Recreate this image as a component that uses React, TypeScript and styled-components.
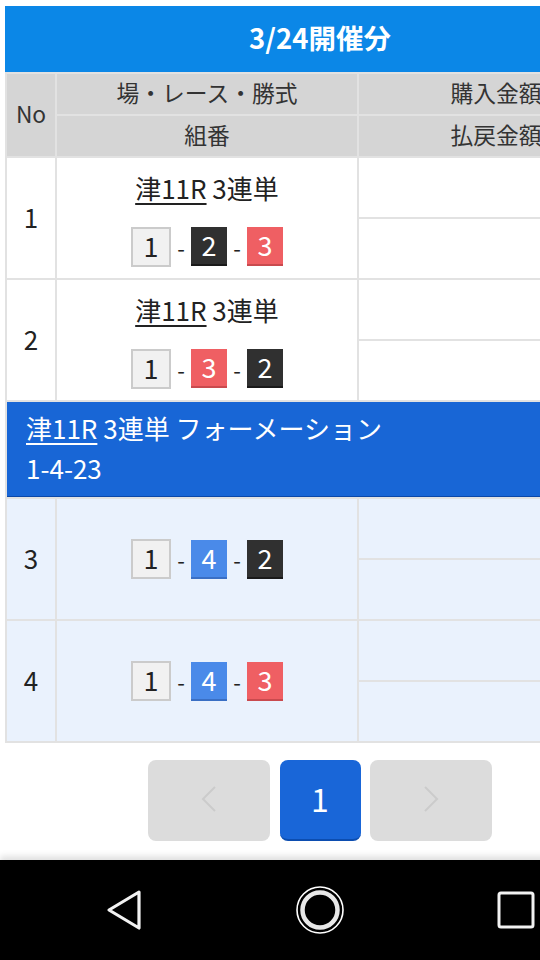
import styled, { createGlobalStyle } from 'styled-components';

const GlobalStyle = createGlobalStyle`
  html, body {
    margin: 0;
    padding: 0;
    background: #fff;
    overflow: hidden;
  }
  body {
    font-family: 'Noto Sans CJK JP', Roboto, sans-serif;
    color: #222;
  }
`;

const Frame = styled.div`
  width: 540px;
  height: 960px;
  overflow: hidden;
`;

const Page = styled.div`
  width: 640px;
  height: 960px;
  display: flex;
  flex-direction: column;
`;

const Content = styled.div`
  padding: 6px 5px 0;
`;

// the CJK font sits low in its line box, so centred text gets a little bottom padding
const TitleBar = styled.div`
  box-sizing: border-box;
  height: 66px;
  padding-bottom: 4px;
  background: #0b87e7;
  color: #fff;
  font-size: 27.5px;
  font-weight: 700;
  display: flex;
  align-items: center;
  justify-content: center;
`;

const Table = styled.div`
  display: grid;
  grid-template-columns: 48px 300px 274px;
  gap: 2px;
  padding: 2px;
  background: #e2e2e2;
`;

const HeadCell = styled.div<{ $tall?: boolean }>`
  box-sizing: border-box;
  background: #d5d5d5;
  color: #333;
  font-size: 22.75px;
  height: ${(p) => (p.$tall ? 'auto' : '40px')};
  grid-row: ${(p) => (p.$tall ? 'span 2' : 'auto')};
  padding-bottom: 4px;
  display: flex;
  align-items: center;
  justify-content: center;
`;

const Cell = styled.div<{ $tint?: boolean }>`
  background: ${(p) => (p.$tint ? '#eaf2fd' : '#fff')};
  height: 120px;
  display: flex;
  flex-direction: column;
  align-items: center;
  justify-content: center;
  gap: 17px;
`;

const NoCell = styled(Cell)`
  box-sizing: border-box;
  padding-bottom: 4px;
  font-size: 26px;
  color: #222;
`;

const AmountCell = styled.div`
  display: grid;
  grid-template-rows: 1fr 1fr;
  gap: 2px;
  background: #e2e2e2;
`;

const AmountPart = styled.div<{ $tint?: boolean }>`
  background: ${(p) => (p.$tint ? '#eaf2fd' : '#fff')};
`;

const RaceTitle = styled.div`
  font-size: 26px;
  line-height: 36px;
  padding-bottom: 4px;
  color: #222;
`;

const Place = styled.span`
  text-decoration: underline;
  text-underline-offset: 4px;
`;

const Combo = styled.div`
  display: flex;
  align-items: center;
  gap: 6px;
`;

const Dash = styled.span`
  width: 8px;
  text-align: center;
  font-size: 22px;
  color: #222;
`;

const boatColors: Record<number, { bg: string; edge: string; fg: string }> = {
  2: { bg: '#303030', edge: '#1a1a1a', fg: '#fff' },
  3: { bg: '#ef5f63', edge: '#c94a4e', fg: '#fff' },
  4: { bg: '#4a8ae9', edge: '#3a6fc4', fg: '#fff' },
};

const Boat = styled.span<{ $n: number }>`
  box-sizing: border-box;
  display: flex;
  align-items: center;
  justify-content: center;
  font-size: 27px;
  line-height: 1;
  ${(p) =>
    p.$n === 1
      ? `
    width: 40px;
    height: 40px;
    padding-bottom: 3px;
    background: #f1f1f1;
    border: 2px solid #cbcbcb;
    color: #222;
  `
      : `
    width: 36px;
    height: 39px;
    padding-bottom: 2px;
    background: ${boatColors[p.$n].bg};
    border-bottom: 2px solid ${boatColors[p.$n].edge};
    color: ${boatColors[p.$n].fg};
  `}
`;

const Formation = styled.div`
  grid-column: 1 / -1;
  box-sizing: border-box;
  height: 95px;
  background: #1866d6;
  border-bottom: 1px solid #0b48a8;
  color: #fff;
  font-size: 26px;
  line-height: 40px;
  padding: 6px 19px 0;
`;

const Pager = styled.div`
  flex: 1;
  display: flex;
  justify-content: center;
  gap: 9.5px;
  padding-top: 17px;
`;

const PageButton = styled.div<{ $active?: boolean }>`
  box-sizing: border-box;
  width: ${(p) => (p.$active ? '81px' : '122px')};
  height: 81px;
  border-radius: 8px;
  padding-bottom: 3px;
  background: ${(p) => (p.$active ? '#1966d8' : '#dcdcdc')};
  border-bottom: ${(p) => (p.$active ? '2px solid #0c4db0' : 'none')};
  color: #fff;
  font-size: 32px;
  line-height: 1;
  display: flex;
  align-items: center;
  justify-content: center;
`;

const NavBar = styled.div`
  height: 100px;
  background: #000;
  box-shadow: 0 -4px 6px rgba(0, 0, 0, 0.12);
  display: flex;
  align-items: center;
  padding-left: 26px;
`;

const NavSlot = styled.div`
  width: 196px;
  display: flex;
  justify-content: center;
`;

type Bet = { no: number; combo: number[]; title?: boolean; tint?: boolean };

const bets: Bet[] = [
  { no: 1, combo: [1, 2, 3], title: true },
  { no: 2, combo: [1, 3, 2], title: true },
];

const formationBets: Bet[] = [
  { no: 3, combo: [1, 4, 2], tint: true },
  { no: 4, combo: [1, 4, 3], tint: true },
];

function ComboView({ combo }: { combo: number[] }) {
  return (
    <Combo>
      {combo.map((n, i) => (
        <Combo key={i}>
          {i > 0 && <Dash>-</Dash>}
          <Boat $n={n}>{n}</Boat>
        </Combo>
      ))}
    </Combo>
  );
}

function BetRow({ bet }: { bet: Bet }) {
  return (
    <>
      <NoCell $tint={bet.tint}>{bet.no}</NoCell>
      <Cell $tint={bet.tint}>
        {bet.title && (
          <RaceTitle>
            <Place>津11R</Place> 3連単
          </RaceTitle>
        )}
        <ComboView combo={bet.combo} />
      </Cell>
      <AmountCell>
        <AmountPart $tint={bet.tint} />
        <AmountPart $tint={bet.tint} />
      </AmountCell>
    </>
  );
}

export default function App() {
  return (
    <Frame>
      <GlobalStyle />
      <Page>
        <Content>
          <TitleBar>3/24開催分</TitleBar>
          <Table>
            <HeadCell $tall>No</HeadCell>
            <HeadCell>場・レース・勝式</HeadCell>
            <HeadCell>購入金額</HeadCell>
            <HeadCell>組番</HeadCell>
            <HeadCell>払戻金額</HeadCell>
            {bets.map((b) => (
              <BetRow key={b.no} bet={b} />
            ))}
            <Formation>
              <Place>津11R</Place> 3連単 フォーメーション
              <br />
              1-4-23
            </Formation>
            {formationBets.map((b) => (
              <BetRow key={b.no} bet={b} />
            ))}
          </Table>
        </Content>
        <Pager>
          <PageButton>
            <svg width="16" height="26" viewBox="0 0 16 26">
              <polyline points="14,1 2,13 14,25" fill="none" stroke="#cbcbcb" strokeWidth="2" />
            </svg>
          </PageButton>
          <PageButton $active>1</PageButton>
          <PageButton>
            <svg width="16" height="26" viewBox="0 0 16 26">
              <polyline points="2,1 14,13 2,25" fill="none" stroke="#cbcbcb" strokeWidth="2" />
            </svg>
          </PageButton>
        </Pager>
        <NavBar>
          <NavSlot>
            <svg width="38" height="42" viewBox="0 0 38 42">
              <polygon
                points="34,3 4,21 34,39"
                fill="none"
                stroke="#f2f2f2"
                strokeWidth="3.2"
                strokeLinejoin="round"
              />
            </svg>
          </NavSlot>
          <NavSlot>
            <svg width="50" height="50" viewBox="0 0 50 50">
              <circle cx="25" cy="25" r="23" fill="none" stroke="#fff" strokeWidth="1.6" />
              <circle cx="25" cy="25" r="17.5" fill="none" stroke="#e8e8e8" strokeWidth="4.5" />
            </svg>
          </NavSlot>
          <NavSlot>
            <svg width="38" height="38" viewBox="0 0 38 38">
              <rect x="2" y="2" width="34" height="34" rx="2" fill="none" stroke="#f2f2f2" strokeWidth="3" />
            </svg>
          </NavSlot>
        </NavBar>
      </Page>
    </Frame>
  );
}
